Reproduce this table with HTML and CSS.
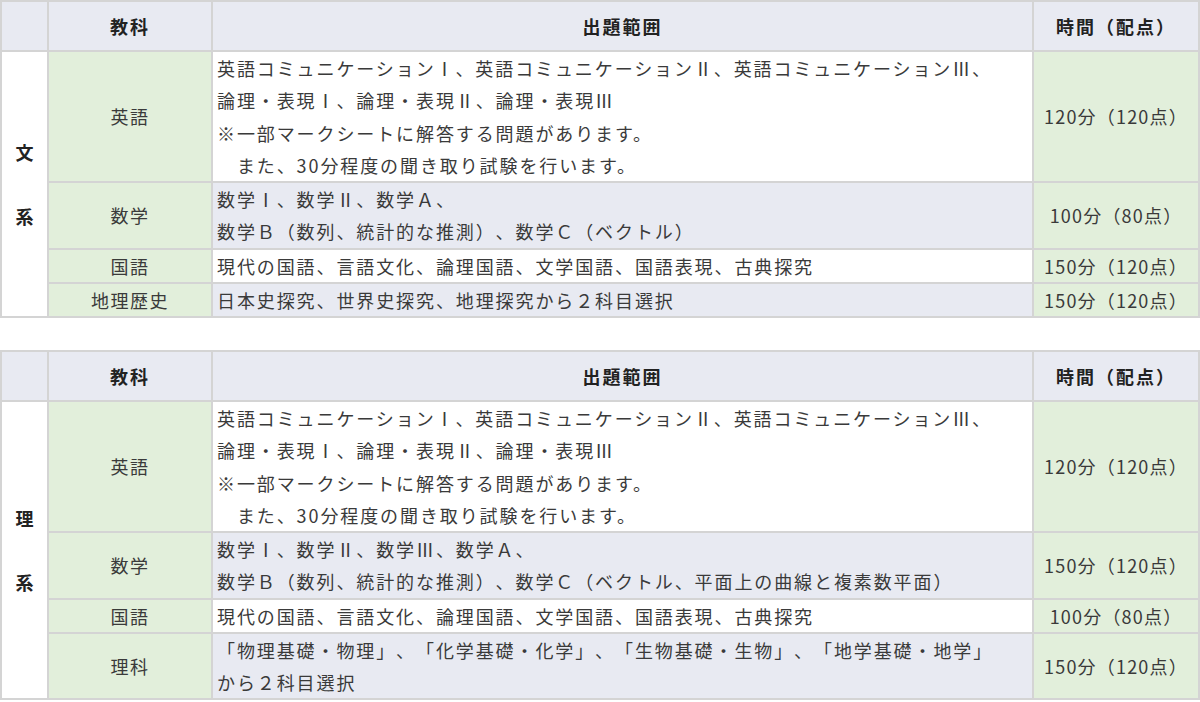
FILE: index.html
```html
<!DOCTYPE html>
<html lang="ja">
<head>
<meta charset="utf-8">
<link rel="stylesheet" href="styles.css">
</head>
<body>
<table class="exam">
  <colgroup><col class="c1"><col class="c2"><col class="c3"><col class="c4"></colgroup>
  <thead>
    <tr><th></th><th>教科</th><th>出題範囲</th><th>時間（配点）</th></tr>
  </thead>
  <tbody>
    <tr>
      <td class="track" rowspan="4">文<br><br>系</td>
      <td class="subj">英語</td>
      <td class="desc white">英語コミュニケーションⅠ、英語コミュニケーションⅡ、英語コミュニケーションⅢ、<br>論理・表現Ⅰ、論理・表現Ⅱ、論理・表現Ⅲ<br>※一部マークシートに解答する問題があります。<br>　また、30分程度の聞き取り試験を行います。</td>
      <td class="time">120分（120点）</td>
    </tr>
    <tr>
      <td class="subj">数学</td>
      <td class="desc grey">数学Ⅰ、数学Ⅱ、数学Ａ、<br>数学Ｂ（数列、統計的な推測）、数学Ｃ（ベクトル）</td>
      <td class="time">100分（80点）</td>
    </tr>
    <tr>
      <td class="subj">国語</td>
      <td class="desc white">現代の国語、言語文化、論理国語、文学国語、国語表現、古典探究</td>
      <td class="time">150分（120点）</td>
    </tr>
    <tr>
      <td class="subj">地理歴史</td>
      <td class="desc grey">日本史探究、世界史探究、地理探究から２科目選択</td>
      <td class="time">150分（120点）</td>
    </tr>
  </tbody>
</table>

<table class="exam">
  <colgroup><col class="c1"><col class="c2"><col class="c3"><col class="c4"></colgroup>
  <thead>
    <tr><th></th><th>教科</th><th>出題範囲</th><th>時間（配点）</th></tr>
  </thead>
  <tbody>
    <tr>
      <td class="track" rowspan="4">理<br><br>系</td>
      <td class="subj">英語</td>
      <td class="desc white">英語コミュニケーションⅠ、英語コミュニケーションⅡ、英語コミュニケーションⅢ、<br>論理・表現Ⅰ、論理・表現Ⅱ、論理・表現Ⅲ<br>※一部マークシートに解答する問題があります。<br>　また、30分程度の聞き取り試験を行います。</td>
      <td class="time">120分（120点）</td>
    </tr>
    <tr>
      <td class="subj">数学</td>
      <td class="desc grey">数学Ⅰ、数学Ⅱ、数学Ⅲ、数学Ａ、<br>数学Ｂ（数列、統計的な推測）、数学Ｃ（ベクトル、平面上の曲線と複素数平面）</td>
      <td class="time">150分（120点）</td>
    </tr>
    <tr>
      <td class="subj">国語</td>
      <td class="desc white">現代の国語、言語文化、論理国語、文学国語、国語表現、古典探究</td>
      <td class="time">100分（80点）</td>
    </tr>
    <tr>
      <td class="subj">理科</td>
      <td class="desc grey">「物理基礎・物理」、「化学基礎・化学」、「生物基礎・生物」、「地学基礎・地学」<br>から２科目選択</td>
      <td class="time">150分（120点）</td>
    </tr>
  </tbody>
</table>
</body>
</html>
```
FILE: styles.css
```css
html, body {
  margin: 0;
  padding: 0;
  background: #ffffff;
}

body {
  font-family: "Noto Sans CJK JP", "Noto Sans", sans-serif;
  color: #3a3a3a;
  font-size: 18px;
  text-spacing-trim: space-all;
}

.exam {
  width: 1200px;
  border-collapse: collapse;
  table-layout: fixed;
  margin: 0 0 32px 0;
}

.exam .c1 { width: 47px; }
.exam .c2 { width: 164px; }
.exam .c3 { width: 821px; }
.exam .c4 { width: 166px; }

.exam th,
.exam td {
  border: 2px solid #d4d4d4;
  padding: 0;
  line-height: 32.25px;
  vertical-align: middle;
}

.exam th {
  background: #e8eaf2;
  height: 48px;
  font-weight: 700;
  color: #222222;
  text-align: center;
  letter-spacing: 2px;
}

.track {
  background: #ffffff;
  text-align: center;
  font-weight: 700;
  color: #222222;
}

.subj {
  background: #e2efdb;
  text-align: center;
  letter-spacing: 1.5px;
}

.desc {
  padding-left: 4px !important;
  letter-spacing: 1.9px;
  white-space: nowrap;
}

.white { background: #ffffff; }
.grey { background: #e8eaf2; }

.time {
  background: #e2efdb;
  text-align: center;
  letter-spacing: 1.2px;
}
```
